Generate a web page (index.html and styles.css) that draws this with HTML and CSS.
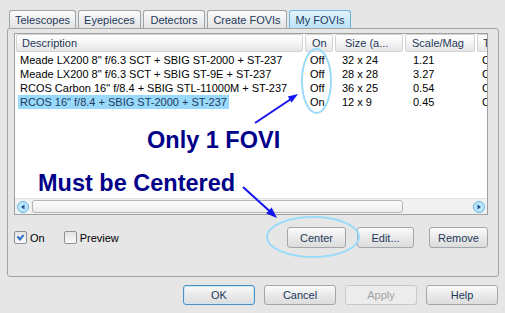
FILE: index.html
```html
<!DOCTYPE html>
<html lang="en">
<head>
    <meta charset="UTF-8">
    <title>My FOVIs</title>
    <link rel="stylesheet" href="styles.css">
</head>
<body>
    <div class="dialog">
        <div class="tabs">
            <div class="tab">Telescopes</div>
            <div class="tab">Eyepieces</div>
            <div class="tab">Detectors</div>
            <div class="tab">Create FOVIs</div>
            <div class="tab active">My FOVIs</div>
        </div>

        <div class="panel">
            <div class="listbox">
                <div class="list-body">
                    <div class="grid head">
                        <div class="hcell desc">Description</div>
                        <div class="hcell on">On</div>
                        <div class="hcell size">Size (a...</div>
                        <div class="hcell scale">Scale/Mag</div>
                        <div class="hcell type">T</div>
                    </div>
                    <div class="grid row">
                        <div class="desc"><span>Meade LX200 8" f/6.3 SCT + SBIG ST-2000 + ST-237</span></div>
                        <div class="on">Off</div>
                        <div class="size">32 x 24</div>
                        <div class="scale">1.21</div>
                        <div class="type">C</div>
                    </div>
                    <div class="grid row">
                        <div class="desc"><span>Meade LX200 8" f/6.3 SCT + SBIG ST-9E + ST-237</span></div>
                        <div class="on">Off</div>
                        <div class="size">28 x 28</div>
                        <div class="scale">3.27</div>
                        <div class="type">C</div>
                    </div>
                    <div class="grid row">
                        <div class="desc"><span>RCOS Carbon 16" f/8.4 + SBIG STL-11000M + ST-237</span></div>
                        <div class="on">Off</div>
                        <div class="size">36 x 25</div>
                        <div class="scale">0.54</div>
                        <div class="type">C</div>
                    </div>
                    <div class="grid row selected">
                        <div class="desc"><span>RCOS 16" f/8.4 + SBIG ST-2000 + ST-237</span></div>
                        <div class="on">On</div>
                        <div class="size">12 x 9</div>
                        <div class="scale">0.45</div>
                        <div class="type">C</div>
                    </div>
                </div>
                <div class="hscroll">
                    <svg class="arrow" width="12" height="12" viewBox="0 0 12 12"><circle cx="6" cy="6" r="5.5" fill="#bfe5fa" stroke="#68b3e3"/><polygon points="7.5,3.5 7.5,8.5 4,6" fill="#1d4f8f"/></svg>
                    <span class="thumb"></span>
                    <svg class="arrow right" width="12" height="12" viewBox="0 0 12 12"><circle cx="6" cy="6" r="5.5" fill="#bfe5fa" stroke="#68b3e3"/><polygon points="4.5,3.5 4.5,8.5 8,6" fill="#1d4f8f"/></svg>
                </div>
            </div>

            <div class="controls">
                <label class="check"><span class="box"><svg width="11" height="11" viewBox="0 0 11 11"><path d="M2.5 4.5 L5 7.5 L8.5 3" fill="none" stroke="#2566c4" stroke-width="2"/></svg></span>On</label>
                <label class="check"><span class="box"></span>Preview</label>
                <button class="btn btn-center">Center</button>
                <button class="btn btn-edit">Edit...</button>
                <button class="btn btn-remove">Remove</button>
            </div>
        </div>

        <div class="footer">
            <button class="btn btn-wide btn-default">OK</button>
            <button class="btn btn-wide">Cancel</button>
            <button class="btn btn-wide" disabled>Apply</button>
            <button class="btn btn-wide">Help</button>
        </div>
    </div>

    <!-- annotations drawn over the dialog -->
    <svg class="notes" width="505" height="313" viewBox="0 0 505 313">
        <ellipse cx="316.5" cy="81" rx="14.5" ry="32" fill="none" stroke="#9adbfa" stroke-width="2"/>
        <ellipse cx="313" cy="237" rx="46" ry="20" fill="none" stroke="#9adbfa" stroke-width="2"/>
        <line x1="255" y1="123" x2="291" y2="99" stroke="#1414f0" stroke-width="2"/>
        <polygon points="298,94 287.8,96.6 291.6,102.4" fill="#1414f0"/>
        <line x1="243" y1="187" x2="270" y2="211.5" stroke="#1414f0" stroke-width="2"/>
        <polygon points="277,218 266.2,213.6 271.6,207.6" fill="#1414f0"/>
        <text class="note" x="147" y="148">Only 1 FOVI</text>
        <text class="note" x="38" y="190.5">Must be Centered</text>
    </svg>
</body>
</html>
```

FILE: styles.css
```css
body {
    margin: 0;
    width: 505px;
    height: 313px;
    overflow: hidden;
    position: relative;
    background: #e6e6e6;
    font: 11px "Liberation Sans", Arial, sans-serif;
    color: #1e395b;
}

.dialog {
    padding-top: 10px;
}

/* tab strip */
.tabs {
    display: flex;
    gap: 2px;
    height: 18px;
    padding-left: 9px;
}

.tab {
    box-sizing: border-box;
    height: 18px;
    border: 1px solid #9da4aa;
    border-bottom: none;
    border-radius: 3px 3px 0 0;
    background: linear-gradient(#fbfbfb, #e3e3e3);
    display: flex;
    align-items: center;
    justify-content: center;
    white-space: nowrap;
}

.tab:nth-child(1) { width: 67px; }
.tab:nth-child(2) { width: 63px; }
.tab:nth-child(3) { width: 62px; }
.tab:nth-child(4) { width: 80px; }
.tab:nth-child(5) { width: 62px; }

.tab.active {
    border-color: #6fb2de;
    background: linear-gradient(#e3f4fd, #b9e2f8);
}

.panel {
    box-sizing: border-box;
    height: 249px;
    margin: 0 6px 0 7px;
    border: 1px solid #a3a3a3;
    border-radius: 3px;
    padding: 4px 10px 0 6px;
}

/* list view */
.listbox {
    box-sizing: border-box;
    height: 182px;
    background: #fff;
    border: 1px solid #a0a0a0;
    display: flex;
    flex-direction: column;
    overflow: hidden;
}

.list-body {
    flex: 1;
    overflow: hidden;
}

.grid {
    display: grid;
    grid-template-columns: 289px 30px 70px 72px 10px;
    padding-left: 1px;
    white-space: nowrap;
}

.head {
    height: 18px;
    margin-bottom: 1px;
}

.hcell {
    box-sizing: border-box;
    margin-right: 2px;
    border: 1px solid #d3d3d3;
    border-radius: 2px;
    background: linear-gradient(#ffffff, #f4f4f4 50%, #e6e6e6);
    line-height: 16px;
    overflow: hidden;
}

.hcell.desc { padding-left: 5px; }
.hcell.on { padding-left: 6px; }
.hcell.size { padding-left: 9px; }
.hcell.scale { padding-left: 6px; }
.hcell.type { padding-left: 5px; margin-right: 0; border-right: none; border-radius: 2px 0 0 2px; }

.row {
    line-height: 14px;
    color: #000;
}

.row > div {
    overflow: hidden;
}

.row .desc { padding-left: 2px; }
.row .desc span { display: inline-block; padding: 0 2px; }
.row .on { padding-left: 5px; }
.row .size { padding-left: 7px; }
.row .scale { padding-left: 8px; }
.row .type { padding-left: 5px; }

.row.selected .desc span {
    background: #99d9fb;
    color: #1e395b;
}

.hscroll {
    height: 15px;
    background: #f1f1f1;
    border-top: 1px solid #e0e0e0;
    display: flex;
    align-items: center;
    padding: 0 2px;
}

.arrow {
    display: block;
}

.arrow.right {
    margin-left: auto;
}

.thumb {
    box-sizing: border-box;
    width: 371px;
    height: 13px;
    margin-left: 3px;
    border: 1px solid #b4b4b4;
    border-radius: 3px;
    background: linear-gradient(#fdfdfd, #ececec);
}

/* checkboxes and buttons */
.controls {
    display: flex;
    align-items: center;
    height: 21px;
    margin-top: 12px;
}

.check {
    display: flex;
    align-items: center;
    gap: 3px;
    color: #000;
}

.check + .check {
    margin-left: 19px;
}

.box {
    box-sizing: border-box;
    width: 13px;
    height: 13px;
    border: 1px solid #8e9296;
    border-radius: 2px;
    background: linear-gradient(#e4e4e4, #fafafa);
    display: flex;
    align-items: center;
    justify-content: center;
}

.box svg {
    display: block;
}

.btn {
    box-sizing: border-box;
    height: 21px;
    padding: 0;
    border: 1px solid #a2a6aa;
    border-radius: 3px;
    background: linear-gradient(#fbfbfb, #e8e8e8 55%, #dcdcdc);
    font: inherit;
    color: #1e395b;
}

.btn-center { width: 59px; margin-left: auto; }
.btn-edit { width: 57px; margin-left: 11px; }
.btn-remove { width: 59px; margin-left: 15px; }

.footer {
    display: flex;
    justify-content: flex-end;
    gap: 9px;
    padding-right: 7px;
    margin-top: 8px;
}

.btn-wide {
    width: 72px;
    height: 20px;
}

.btn-default {
    border-color: #4a8fc2;
    box-shadow: inset 0 0 0 1px #c8e8f8;
}

.btn:disabled {
    color: #a3a3a3;
    border-color: #c8c8c8;
    background: #ececec;
}

.notes {
    position: absolute;
    left: 0;
    top: 0;
    pointer-events: none;
}

.note {
    font: bold 23.5px "Liberation Sans", Arial, sans-serif;
    fill: #000088;
}
```
